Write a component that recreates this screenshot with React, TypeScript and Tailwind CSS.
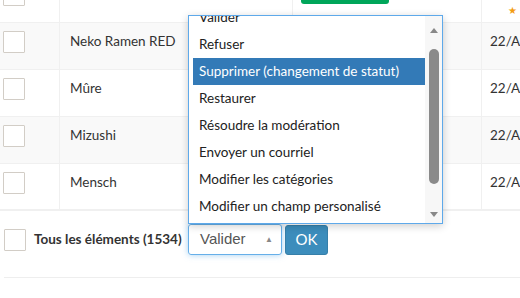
const rows = [
  { name: 'Neko Ramen RED', striped: true },
  { name: 'Mûre', striped: false },
  { name: 'Mizushi', striped: true },
  { name: 'Mensch', striped: false },
]

const options = [
  'Valider',
  'Refuser',
  'Supprimer (changement de statut)',
  'Restaurer',
  'Résoudre la modération',
  'Envoyer un courriel',
  'Modifier les catégories',
  'Modifier un champ personalisé',
]

function Checkbox() {
  return <div className="w-[22px] h-[22px] shrink-0 border border-[#d2cdc6] bg-white rounded-[1px]" />
}

function Row({ name, striped, first, last }: { name: string; striped: boolean; first?: boolean; last?: boolean }) {
  return (
    <div className={`grid grid-cols-[60px_233px_189px_1fr] h-[47px] border-[#f0f0f0] ${last ? 'border-b-2' : 'border-b'} ${striped ? 'bg-[#f9f9f9]' : 'bg-white'} ${first ? '-mt-[24px]' : ''}`}>
      <div className="border-r border-[#f0f0f0] pl-[3px] pt-[8px]">
        <Checkbox />
      </div>
      <div className="border-r border-[#f0f0f0] pl-[10px] pt-[8px] leading-[20px] text-[13.5px] text-[#333]">{name}</div>
      <div className="border-r border-[#f0f0f0] pl-[8px] pt-[8px]">
        {first && <div className="w-[88px] h-[20px] rounded-[3px] bg-[#00a65a]" />}
      </div>
      <div className="pl-[8px] pt-[8px] leading-[20px] text-[13.5px] text-[#333] whitespace-nowrap overflow-hidden">
        {first ? <span className="block text-[#f39c12] text-[10px] ml-[18px] mt-[16px]">★</span> : '22/Août/2023'}
      </div>
    </div>
  )
}

export default function App() {
  return (
    <div className="relative w-[520px] h-[298px] overflow-hidden bg-white" style={{ fontFamily: 'Lato, "Open Sans", sans-serif' }}>
      {/* Table */}
      <div>
        <Row name="" striped={false} first />
        {rows.map((r, i) => (
          <Row key={r.name} name={r.name} striped={r.striped} last={i === rows.length - 1} />
        ))}
      </div>

      {/* Bulk actions */}
      <div className="flex items-center h-[33px] mt-[12px] pl-[4px]">
        <Checkbox />
        <span className="ml-[8px] w-[150px] text-[13.5px] font-bold text-[#333] whitespace-nowrap">Tous les éléments (1534)</span>
        <div className="ml-[4px] w-[94px] h-[31px] border border-[#66afe9] rounded-[3px] shadow-[0_0_6px_rgba(102,175,233,0.6)] flex items-center justify-between pl-[11px] pr-[8px] text-[15px] text-[#555]" style={{ fontFamily: '"Liberation Sans", Arial, sans-serif' }}>
          <span>Valider</span>
          <span className="text-[8px] text-[#888]">▲</span>
        </div>
        <button className="ml-[3px] w-[43px] h-[30px] bg-[#3c8dbc] border border-[#367fa9] rounded-[3px] text-white text-[15px]">OK</button>
      </div>

      <div className="mt-[21px] ml-[4px] border-t border-[#eee] h-[21px]" />
      <div className="ml-[332px] flex h-[2px]">
        <div className="w-[32px] bg-[#3c8dbc]" />
        <div className="flex-1 bg-[#ddd]" />
      </div>

      {/* Open select listbox */}
      <div className="absolute left-[188px] top-[15px] w-[255px] h-[209px] bg-white border border-[#5ea9ea] shadow-[0_2px_8px_rgba(0,0,0,0.2)] flex overflow-hidden">
        <div className="flex-1 pl-[4px] overflow-hidden">
          <div className="-mt-[12px]">
            {options.map((o) => (
              <div
                key={o}
                className={`h-[27px] flex items-center pl-[6px] text-[13.5px] whitespace-nowrap ${o.startsWith('Supprimer') ? 'bg-[#337ab7] text-white' : 'text-[#222]'}`}
              >
                {o}
              </div>
            ))}
          </div>
        </div>
        <div className="w-[17px] bg-[#f7f7f7] flex flex-col items-center pt-[12px] pb-[6px]">
          <div className="w-0 h-0 border-l-[4.5px] border-r-[4.5px] border-b-[5px] border-l-transparent border-r-transparent border-b-[#888]" />
          <div className="mt-[16px] w-[10px] h-[135px] rounded-full bg-[#8a8a8a]" />
          <div className="flex-1" />
          <div className="w-0 h-0 border-l-[4.5px] border-r-[4.5px] border-t-[5px] border-l-transparent border-r-transparent border-t-[#888]" />
        </div>
      </div>
    </div>
  )
}
